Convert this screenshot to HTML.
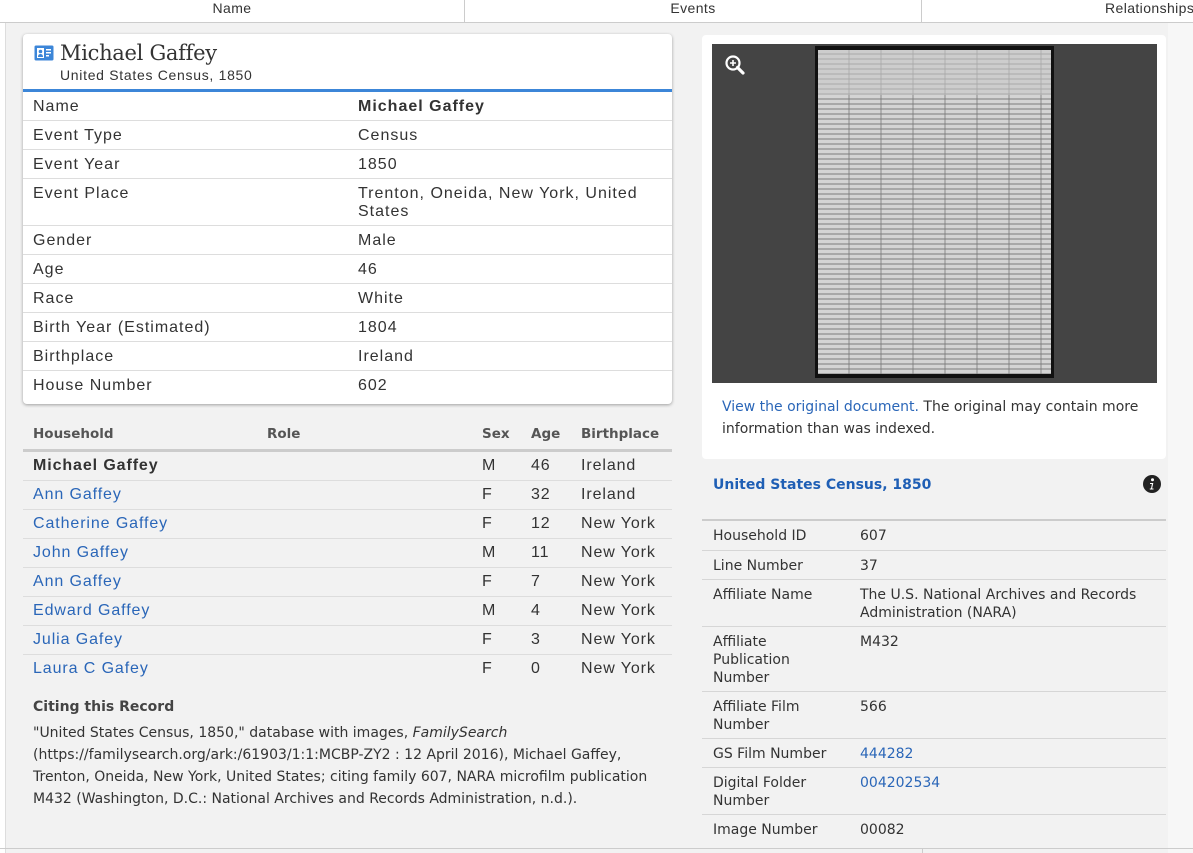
<!DOCTYPE html>
<html><head><meta charset="utf-8"><style>
*{margin:0;padding:0;box-sizing:border-box}
body{width:1193px;height:853px;overflow:hidden;background:#f2f2f2;font-family:"Liberation Sans",sans-serif;color:#333;position:relative}
.a{position:absolute}
.top{left:0;top:0;width:1193px;height:23px;background:#fff;border-bottom:1px solid #ccc;font-size:14px;color:#333}
.top div{position:absolute;top:0;height:22px;line-height:16px;text-align:center;letter-spacing:.4px}
.card{left:23px;top:34px;width:649px;height:370px;background:#fff;border-radius:4px;box-shadow:0 1px 3px rgba(0,0,0,.35)}
.row{position:absolute;left:0;width:649px;border-top:1px solid #ddd;font-size:16px;color:#333;letter-spacing:1px}
.row span{position:absolute;top:6px;line-height:18px}
.l{left:10px}.v{left:335px;width:290px}
.hh{font-size:16px;position:absolute;left:23px;width:649px;border-top:1px solid #ddd;height:29px;letter-spacing:.9px}
.hh span{position:absolute;top:5px}
a,.lk{color:#2a66b8;text-decoration:none}
.rt{font-family:"DejaVu Sans",sans-serif;font-size:14px;color:#333}
.rr{position:absolute;left:702px;width:464px;border-top:1px solid #d6d6d6}
.rr span{position:absolute;top:6px;line-height:18px}
</style></head><body>
<div class="a top">
<div style="left:0;width:465px;border-right:1px solid #ccc">Name</div>
<div style="left:465px;width:457px;border-right:1px solid #ccc">Events</div>
<div style="left:922px;width:271px;text-align:left;padding-left:183px">Relationships</div>
</div>
<div class="a" style="left:0;top:23px;width:6px;height:830px;background:#fff;border-right:1px solid #ddd"></div>

<div class="a card">
<svg class="a" style="left:11px;top:11px" width="20" height="16" viewBox="0 0 20 16"><rect x="0.5" y="0.5" width="19" height="15" rx="1.5" fill="#3c86d8"/><rect x="3" y="3" width="7" height="10" fill="#fff"/><circle cx="6.5" cy="6.5" r="1.8" fill="#3c86d8"/><path d="M4 12c0-2 1-3 2.5-3s2.5 1 2.5 3z" fill="#3c86d8"/><rect x="12" y="4" width="5" height="1.5" fill="#fff"/><rect x="12" y="7" width="5" height="1.5" fill="#fff"/><rect x="12" y="10" width="3" height="1.5" fill="#fff"/></svg>
<div class="a" style="left:37px;top:7px;font-family:'DejaVu Serif','Liberation Serif',serif;font-size:21px;color:#333;letter-spacing:-.3px">Michael Gaffey</div>
<div class="a" style="left:37px;top:33px;font-size:14px;color:#333;letter-spacing:.7px">United States Census, 1850</div>
<div class="a" style="left:0;top:55px;width:649px;height:3px;background:#3c86d8"></div>
<div class="row" style="top:58px;height:28px;border-top:none"><span class="l">Name</span><span class="v" style="font-weight:bold">Michael Gaffey</span></div>
<div class="row" style="top:86px;height:29px"><span class="l">Event Type</span><span class="v">Census</span></div>
<div class="row" style="top:115px;height:29px"><span class="l">Event Year</span><span class="v">1850</span></div>
<div class="row" style="top:144px;height:47px"><span class="l">Event Place</span><span class="v">Trenton, Oneida, New York, United States</span></div>
<div class="row" style="top:191px;height:29px"><span class="l">Gender</span><span class="v">Male</span></div>
<div class="row" style="top:220px;height:29px"><span class="l">Age</span><span class="v">46</span></div>
<div class="row" style="top:249px;height:29px"><span class="l">Race</span><span class="v">White</span></div>
<div class="row" style="top:278px;height:29px"><span class="l">Birth Year (Estimated)</span><span class="v">1804</span></div>
<div class="row" style="top:307px;height:29px"><span class="l">Birthplace</span><span class="v">Ireland</span></div>
<div class="row" style="top:336px;height:29px"><span class="l">House Number</span><span class="v">602</span></div>
</div>

<div class="a rt" style="left:33px;top:426px;font-weight:bold;font-size:13.5px;color:#555">Household</div>
<div class="a rt" style="left:267px;top:426px;font-weight:bold;font-size:13.5px;color:#555">Role</div>
<div class="a rt" style="left:482px;top:426px;font-weight:bold;font-size:13.5px;color:#555">Sex</div>
<div class="a rt" style="left:531px;top:426px;font-weight:bold;font-size:13.5px;color:#555">Age</div>
<div class="a rt" style="left:581px;top:426px;font-weight:bold;font-size:13.5px;color:#555">Birthplace</div>
<div class="a" style="left:23px;top:449px;width:649px;height:3px;background:#ccc"></div>
<div class="hh" style="top:452px;border-top:none"><span style="left:10px;font-weight:bold">Michael Gaffey</span><span style="left:459px">M</span><span style="left:508px">46</span><span style="left:558px">Ireland</span></div>
<div class="hh" style="top:480px"><span class="lk" style="left:10px">Ann Gaffey</span><span style="left:459px">F</span><span style="left:508px">32</span><span style="left:558px">Ireland</span></div>
<div class="hh" style="top:509px"><span class="lk" style="left:10px">Catherine Gaffey</span><span style="left:459px">F</span><span style="left:508px">12</span><span style="left:558px">New York</span></div>
<div class="hh" style="top:538px"><span class="lk" style="left:10px">John Gaffey</span><span style="left:459px">M</span><span style="left:508px">11</span><span style="left:558px">New York</span></div>
<div class="hh" style="top:567px"><span class="lk" style="left:10px">Ann Gaffey</span><span style="left:459px">F</span><span style="left:508px">7</span><span style="left:558px">New York</span></div>
<div class="hh" style="top:596px"><span class="lk" style="left:10px">Edward Gaffey</span><span style="left:459px">M</span><span style="left:508px">4</span><span style="left:558px">New York</span></div>
<div class="hh" style="top:625px"><span class="lk" style="left:10px">Julia Gafey</span><span style="left:459px">F</span><span style="left:508px">3</span><span style="left:558px">New York</span></div>
<div class="hh" style="top:654px"><span class="lk" style="left:10px">Laura C Gafey</span><span style="left:459px">F</span><span style="left:508px">0</span><span style="left:558px">New York</span></div>

<div class="a rt" style="left:33px;top:699px;font-weight:bold;color:#444">Citing this Record</div>
<div class="a rt" style="left:33px;top:722px;width:632px;line-height:22px">"United States Census, 1850," database with images, <i>FamilySearch</i> (https://familysearch.org/ark:/61903/1:1:MCBP-ZY2 : 12 April 2016), Michael Gaffey, Trenton, Oneida, New York, United States; citing family 607, NARA microfilm publication M432 (Washington, D.C.: National Archives and Records Administration, n.d.).</div>

<div class="a" style="left:1168px;top:23px;width:25px;height:830px;background:#f7f7f7"></div>
<div class="a" style="left:702px;top:35px;width:464px;height:424px;background:#fff;border-radius:4px"></div>
<div class="a" style="left:712px;top:44px;width:445px;height:339px;background:#444"></div>
<div class="a" style="left:815px;top:46px;width:239px;height:332px;background:#111"></div>
<div class="a" style="left:818px;top:50px;width:233px;height:324px;background:repeating-linear-gradient(180deg,#d4d4d4 0 3px,#a8a8a8 3px 5px),#ccc"></div>
<div class="a" style="left:818px;top:50px;width:233px;height:324px;background:repeating-linear-gradient(90deg,transparent 0 30px,rgba(120,120,120,.4) 30px 32px)"></div>
<div class="a" style="left:818px;top:50px;width:233px;height:45px;background:rgba(200,200,200,.6)"></div>
<svg class="a" style="left:724px;top:54px" width="22" height="22" viewBox="0 0 22 22"><circle cx="9" cy="9" r="6.5" fill="none" stroke="#fff" stroke-width="2.2"/><path d="M13.5 13.5L19 19" stroke="#fff" stroke-width="3.2" stroke-linecap="round"/><path d="M9 6v6M6 9h6" stroke="#fff" stroke-width="1.6"/></svg>
<div class="a rt" style="left:722px;top:396px;width:440px;line-height:22px"><a>View the original document.</a> The original may contain more information than was indexed.</div>

<div class="a rt" style="left:713px;top:477px;font-weight:bold;color:#1f5fb5">United States Census, 1850</div>
<svg class="a" style="left:1143px;top:475px" width="18" height="18" viewBox="0 0 18 18"><circle cx="9" cy="9" r="9" fill="#222"/><circle cx="9.5" cy="4.8" r="1.5" fill="#fff"/><path d="M7 8h3.3l-1.2 5.5h1.4v1H6.8v-1h1.2l0.9-4.5H7z" fill="#fff"/></svg>
<div class="a" style="left:702px;top:519px;width:464px;height:2px;background:#ccc"></div>
<div class="rr rt" style="top:521px;border-top:none;height:29px"><span style="left:11px">Household ID</span><span style="left:158px">607</span></div>
<div class="rr rt" style="top:550px;height:29px"><span style="left:11px">Line Number</span><span style="left:158px">37</span></div>
<div class="rr rt" style="top:579px;height:47px"><span style="left:11px">Affiliate Name</span><span style="left:158px;width:300px">The U.S. National Archives and Records Administration (NARA)</span></div>
<div class="rr rt" style="top:626px;height:65px"><span style="left:11px;width:118px">Affiliate Publication Number</span><span style="left:158px">M432</span></div>
<div class="rr rt" style="top:691px;height:47px"><span style="left:11px;width:118px">Affiliate Film Number</span><span style="left:158px">566</span></div>
<div class="rr rt" style="top:738px;height:29px"><span style="left:11px">GS Film Number</span><span class="lk" style="left:158px">444282</span></div>
<div class="rr rt" style="top:767px;height:47px"><span style="left:11px;width:118px">Digital Folder Number</span><span class="lk" style="left:158px">004202534</span></div>
<div class="rr rt" style="top:814px;height:34px"><span style="left:11px">Image Number</span><span style="left:158px">00082</span></div>
<div class="a" style="left:0;top:848px;width:1193px;height:1px;background:#ccc"></div>
<div class="a" style="left:922px;top:848px;width:1px;height:5px;background:#ccc"></div>
</body></html>
